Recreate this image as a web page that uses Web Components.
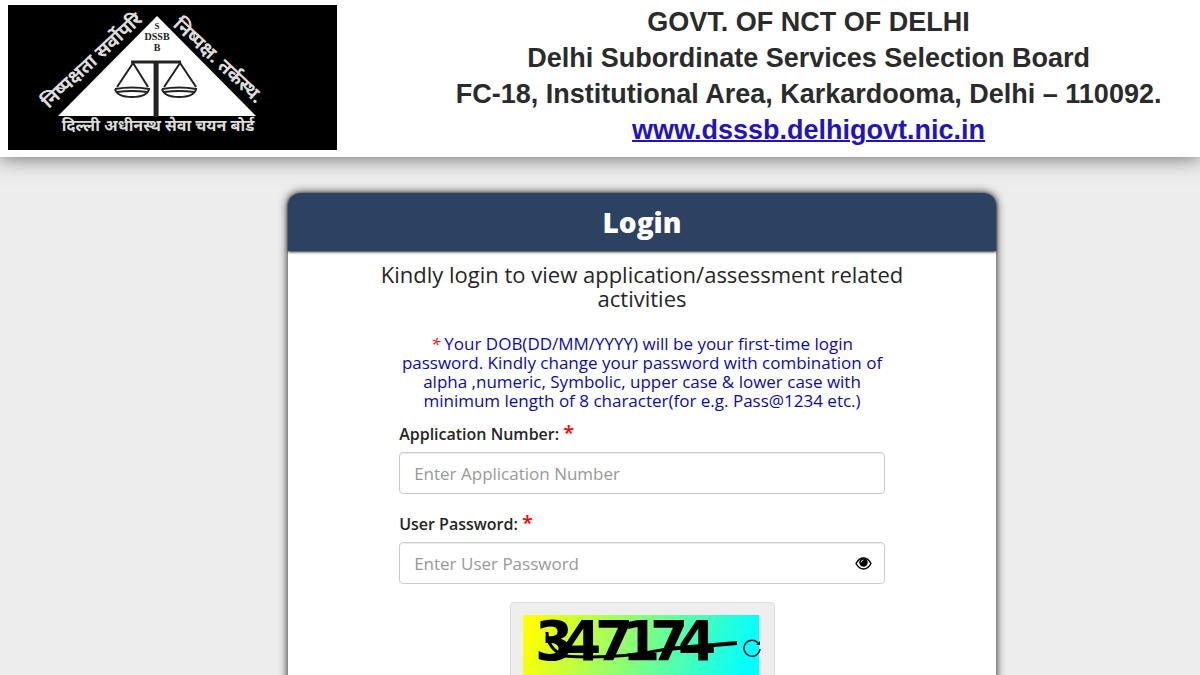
<!DOCTYPE html>
<html lang="en">
<head>
<meta charset="utf-8">
<meta name="viewport" content="width=device-width, initial-scale=1">
<title>DSSSB Login</title>
<style>
    body {
        margin: 0;
        background: #ededed;
        color: #262626;
        font-family: "Open Sans", "Noto Sans", sans-serif;
    }
</style>
</head>
<body>

<board-header href="#">
    <span slot="govt">GOVT. OF NCT OF DELHI</span>
    <span slot="board">Delhi Subordinate Services Selection Board</span>
    <span slot="address">FC-18, Institutional Area, Karkardooma, Delhi – 110092.</span>
    <span slot="site">www.dsssb.delhigovt.nic.in</span>
</board-header>

<login-card>
    <span slot="title">Login</span>
    <span slot="lead">Kindly login to view application/assessment related activities</span>
    <span slot="note">Your DOB(DD/MM/YYYY) will be your first-time login password. Kindly change your password with combination of alpha ,numeric, Symbolic, upper case &amp; lower case with minimum length of 8 character(for e.g. Pass@1234 etc.)</span>
    <form-field label="Application Number:" placeholder="Enter Application Number"></form-field>
    <form-field label="User Password:" placeholder="Enter User Password" type="password"></form-field>
    <captcha-box code="347174"></captcha-box>
</login-card>

<script>
function makeTemplate(html) {
    const template = document.createElement('template');
    template.innerHTML = html;
    return template;
}

// Board emblem: triangle, scales and the motto around it
const logoTemplate = makeTemplate(`
    <style>
        :host { display: block; background: #000; }
        svg { display: block; width: 100%; height: auto; }
        text { font-family: "Noto Sans Devanagari", "Noto Sans", sans-serif; font-weight: bold; fill: #dcdcdc; }
        .initials { font-family: "Liberation Serif", serif; fill: #222; }
    </style>
    <svg viewBox="0 0 329 145" role="img" aria-label="DSSSB emblem">
        <path d="M149 11 L248 111 H50 Z" fill="#fff"/>
        <g text-anchor="middle">
            <text class="initials" x="149" y="24" font-size="9">S</text>
            <text class="initials" x="149" y="35" font-size="10">DSSB</text>
            <text class="initials" x="149" y="46" font-size="10">B</text>
            <text x="150" y="126" font-size="16">दिल्ली अधीनस्थ सेवा चयन बोर्ड</text>
            <text transform="translate(88 60) rotate(-43)" font-size="19">निष्पक्षता सर्वोपरि</text>
            <text transform="translate(206 60) rotate(43)" font-size="19">निष्पक्ष. तर्कस्थ.</text>
        </g>
        <g fill="none" stroke="#222" stroke-width="2">
            <path d="M123 57 H173" stroke-width="3"/>
            <path d="M148 57 V112" stroke-width="5"/>
            <path d="M125 58 L109 82 M125 58 L140 82 M172 58 L156 82 M172 58 L188 82"/>
            <path d="M107 84 Q124 81 141 84 Q139 92 124 92 Q109 92 107 84 M109 87 Q124 85 139 87"/>
            <path d="M154 84 Q171 81 188 84 Q186 92 171 92 Q156 92 154 84 M156 87 Q171 85 186 87"/>
        </g>
    </svg>
`);

class BoardLogo extends HTMLElement {
    constructor() {
        super();
        this.attachShadow({ mode: 'open' });
        this.shadowRoot.appendChild(logoTemplate.content.cloneNode(true));
    }
}

const headerTemplate = makeTemplate(`
    <style>
        :host {
            display: block;
            background: #fff;
            box-shadow: 0 0 20px rgba(0, 0, 0, .6);
        }
        header { display: flex; align-items: flex-end; padding: 4px 8px 7px; }
        board-logo { flex: 0 0 27.8%; }
        .address {
            flex: 1;
            padding: 0 0 2px 88px;
            font: bold 27px/36px "Liberation Sans", Arial, sans-serif;
            color: #2b2b2b;
            text-align: center;
        }
        p { margin: 0; }
        a { color: #1f14c0; text-decoration-thickness: 2px; }
    </style>
    <header>
        <board-logo></board-logo>
        <div class="address">
            <p><slot name="govt"></slot></p>
            <p><slot name="board"></slot></p>
            <p><slot name="address"></slot></p>
            <p><a><slot name="site"></slot></a></p>
        </div>
    </header>
`);

class BoardHeader extends HTMLElement {
    constructor() {
        super();
        this.attachShadow({ mode: 'open' });
        this.shadowRoot.appendChild(headerTemplate.content.cloneNode(true));
    }

    connectedCallback() {
        this.shadowRoot.querySelector('a').href = this.getAttribute('href') || '#';
    }
}

const cardTemplate = makeTemplate(`
    <style>
        :host { display: block; padding: 36px 17% 40px 24%; }
        section {
            background: #fff;
            border-radius: 12px;
            box-shadow: 0 0 10px rgba(0, 0, 0, .9);
        }
        h1 {
            margin: 0;
            border-radius: 12px 12px 0 0;
            background: #2b4263;
            box-shadow: 0 1px 3px rgba(0, 0, 0, .9);
            color: #fff;
            font-size: 28px;
            font-weight: 800;
            line-height: 58px;
            text-align: center;
        }
        form { padding: 11px 15.7% 40px; }
        .lead { margin: 0 -24px 24px; font-size: 22px; line-height: 24px; text-align: center; }
        .note { margin: 0 0 12px; color: #0a0ab4; font-size: 17px; line-height: 19px; text-align: center; }
        .star { margin-right: 4px; color: #f00; font-style: italic; }
    </style>
    <section>
        <h1><slot name="title"></slot></h1>
        <form>
            <p class="lead"><slot name="lead"></slot></p>
            <p class="note"><span class="star">*</span><slot name="note"></slot></p>
            <slot></slot>
        </form>
    </section>
`);

class LoginCard extends HTMLElement {
    constructor() {
        super();
        this.attachShadow({ mode: 'open' });
        this.shadowRoot.appendChild(cardTemplate.content.cloneNode(true));
    }
}

const fieldTemplate = makeTemplate(`
    <style>
        :host { display: block; margin-bottom: 18px; }
        label { display: block; margin-bottom: 5px; font-size: 16px; font-weight: 600; line-height: 25px; }
        .star { color: #f00; font-size: 20px; line-height: 20px; }
        .box {
            display: flex;
            align-items: center;
            border: 1px solid #ccc;
            border-radius: 4px;
            background: #fff;
            box-shadow: inset 0 1px 1px rgba(0, 0, 0, .075);
        }
        input {
            flex: 1;
            min-width: 0;
            height: 40px;
            padding: 0 14px;
            border: 0;
            background: none;
            box-sizing: border-box;
            color: #333;
            font: 17px "Open Sans", sans-serif;
        }
        input::placeholder { color: #999; }
        button { display: flex; margin-right: 12px; padding: 0; border: 0; background: none; cursor: pointer; }
        button[hidden] { display: none; }
    </style>
    <label for="field"><span class="name"></span> <span class="star">*</span></label>
    <div class="box">
        <input id="field">
        <button type="button" aria-label="Show password" hidden>
            <svg width="17" height="13" viewBox="0 0 17 13">
                <path d="M1 6.5 Q4 1 8.5 1 Q13 1 16 6.5 Q13 12 8.5 12 Q4 12 1 6.5 Z" fill="none" stroke="#000" stroke-width="1.4"/>
                <circle cx="8.5" cy="5.5" r="4.2"/>
                <path d="M6.2 5.3 A2.3 2.3 0 0 1 8.5 3" fill="none" stroke="#fff" stroke-width=".8"/>
            </svg>
        </button>
    </div>
`);

class FormField extends HTMLElement {
    constructor() {
        super();
        this.attachShadow({ mode: 'open' });
        this.shadowRoot.appendChild(fieldTemplate.content.cloneNode(true));
    }

    connectedCallback() {
        const input = this.shadowRoot.querySelector('input');
        const toggle = this.shadowRoot.querySelector('button');

        this.shadowRoot.querySelector('.name').innerText = this.getAttribute('label');
        input.placeholder = this.getAttribute('placeholder');
        input.type = this.getAttribute('type') || 'text';
        toggle.hidden = input.type !== 'password';
        toggle.addEventListener('click', () => {
            input.type = input.type === 'password' ? 'text' : 'password';
        });
    }
}

const captchaTemplate = makeTemplate(`
    <style>
        :host { display: flex; justify-content: center; }
        .panel {
            position: relative;
            padding: 12px 15px 12px 12px;
            border: 1px solid #ddd;
            border-radius: 4px;
            background: #eee;
        }
        .picture { display: block; }
        text { font: bold 55px "DejaVu Sans", sans-serif; }
        /* the reload button sits on the edge of the picture */
        button { position: absolute; top: 36px; right: 13px; padding: 0; border: 0; background: none; cursor: pointer; }
        button svg { display: block; }
    </style>
    <div class="panel">
        <svg class="picture" width="236" height="80" viewBox="0 0 236 80" role="img" aria-label="Captcha">
            <defs>
                <linearGradient id="fade" gradientUnits="userSpaceOnUse" x1="10" y1="0" x2="220" y2="70">
                    <stop offset="0" stop-color="#ff0"/>
                    <stop offset="1" stop-color="#0ff"/>
                </linearGradient>
            </defs>
            <rect width="236" height="80" fill="url(#fade)"/>
            <text x="12 40 72 99 127 155" y="45"></text>
            <path d="M24 17 Q24 33 41 41 Q90 45 144 34" fill="none" stroke="#000" stroke-width="3"/>
            <path d="M144 34 L214 28" stroke="#000" stroke-width="4"/>
        </svg>
        <button type="button" aria-label="Reload captcha">
            <svg width="18" height="18" viewBox="0 0 18 18" fill="none" stroke="#123" stroke-width="1.5">
                <path d="M15.5 4.5 A8 8 0 1 0 17 10"/>
                <path d="M17 2 V6 H13 Z" fill="#123" stroke="none"/>
            </svg>
        </button>
    </div>
`);

class CaptchaBox extends HTMLElement {
    constructor() {
        super();
        this.attachShadow({ mode: 'open' });
        this.shadowRoot.appendChild(captchaTemplate.content.cloneNode(true));
    }

    connectedCallback() {
        this.shadowRoot.querySelector('text').textContent = this.getAttribute('code');
    }
}

window.customElements.define('board-logo', BoardLogo);
window.customElements.define('board-header', BoardHeader);
window.customElements.define('form-field', FormField);
window.customElements.define('captcha-box', CaptchaBox);
window.customElements.define('login-card', LoginCard);
</script>
</body>
</html>
